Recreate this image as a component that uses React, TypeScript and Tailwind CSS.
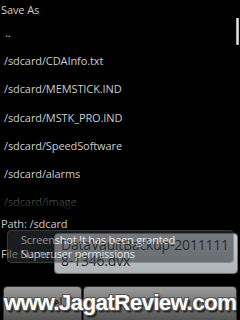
import React from "react";

const files = [
  "..",
  "/sdcard/CDAInfo.txt",
  "/sdcard/MEMSTICK.IND",
  "/sdcard/MSTK_PRO.IND",
  "/sdcard/SpeedSoftware",
  "/sdcard/alarms",
  "/sdcard/image",
];

export default function App() {
  return (
    <div
      className="relative w-[240px] h-[320px] overflow-hidden bg-black text-[#cccccc]"
      style={{ fontFamily: '"Open Sans", "DejaVu Sans", sans-serif' }}
    >
      <div className="h-[18px] pl-[1px] flex items-center text-[11px] tracking-[-0.1px] leading-none whitespace-nowrap">Save As</div>
      <div className="relative h-[196px] overflow-hidden">
        {files.map((f, i) => (
          <div
            key={f}
            className={`h-[28.3px] flex items-center pl-[4px] text-[11px] tracking-[-0.1px] leading-none whitespace-nowrap ${
              i === 6 ? "text-[#555]" : ""
            }`}
          >
            {i === 0 ? <span className="pl-[1px]">..</span> : f}
          </div>
        ))}
        <div className="absolute left-0 right-0 bottom-0 h-[16px] bg-gradient-to-b from-transparent to-black" />
        <div className="absolute right-[1px] top-[-3px] w-[3px] h-[30px] rounded-[1px] bg-gradient-to-r from-[#9a9a9a] via-[#dddddd] to-[#9a9a9a]" />
      </div>
      <div className="h-[18px] pl-[1px] flex items-center text-[11px] tracking-[-0.1px] leading-none whitespace-nowrap">Path: /sdcard</div>
      <div className="flex items-center h-[42px] pl-[1px] pr-[2px]">
        <div className="w-[53px] shrink-0 text-[11px] tracking-[-0.2px] leading-none whitespace-nowrap">File Name:</div>
        <div className="flex-1 h-[41px] rounded-[4px] border border-[#6d7378] bg-gradient-to-b from-[#c9ccce] to-[#aeb3b7] text-[#1e1e1e] text-[14px] tracking-[-0.2px] leading-[16px] pl-[6px] pt-[3px] whitespace-nowrap">
          DataVaultBackup-2011111
          <br />
          8-1346.dvx
        </div>
      </div>
      <div className="flex mt-[12px] px-[3px] gap-[1px]">
        <div className="w-[79px] h-[40px] rounded-[4px] border border-[#333] bg-gradient-to-b from-[#9a9a9a] to-[#4a4a4a] flex justify-center pt-[6px] text-[#222] text-[13px]">
          Cancel
        </div>
        <div className="flex-1 h-[40px] rounded-[4px] border border-[#333] bg-gradient-to-b from-[#9a9a9a] to-[#4a4a4a] flex justify-center pt-[6px] text-[#222] text-[13px]">
          Save
        </div>
      </div>

      {/* toast overlay */}
      <div className="absolute left-[7px] top-[230px] w-[227px] h-[33px] rounded-[4px] border border-[#666] bg-[#30353b] opacity-55 text-white text-[11px] tracking-[-0.2px] leading-[14px] pl-[13px] pt-[2px] whitespace-nowrap">
        Screenshot It has been granted
        <br />
        Superuser permissions
      </div>

      {/* watermark */}
      <div
        className="absolute left-0 right-0 top-[292px] text-center text-white font-bold text-[22.5px] leading-none tracking-[-0.7px] whitespace-nowrap"
        style={{
          fontFamily: '"Liberation Sans", Arial, sans-serif',
          textShadow:
            "1px 1px 0 #555, -1px -1px 0 #555, 1px -1px 0 #555, -1px 1px 0 #555, 2px 2px 2px #000",
        }}
      >
        www.JagatReview.com
      </div>
    </div>
  );
}
